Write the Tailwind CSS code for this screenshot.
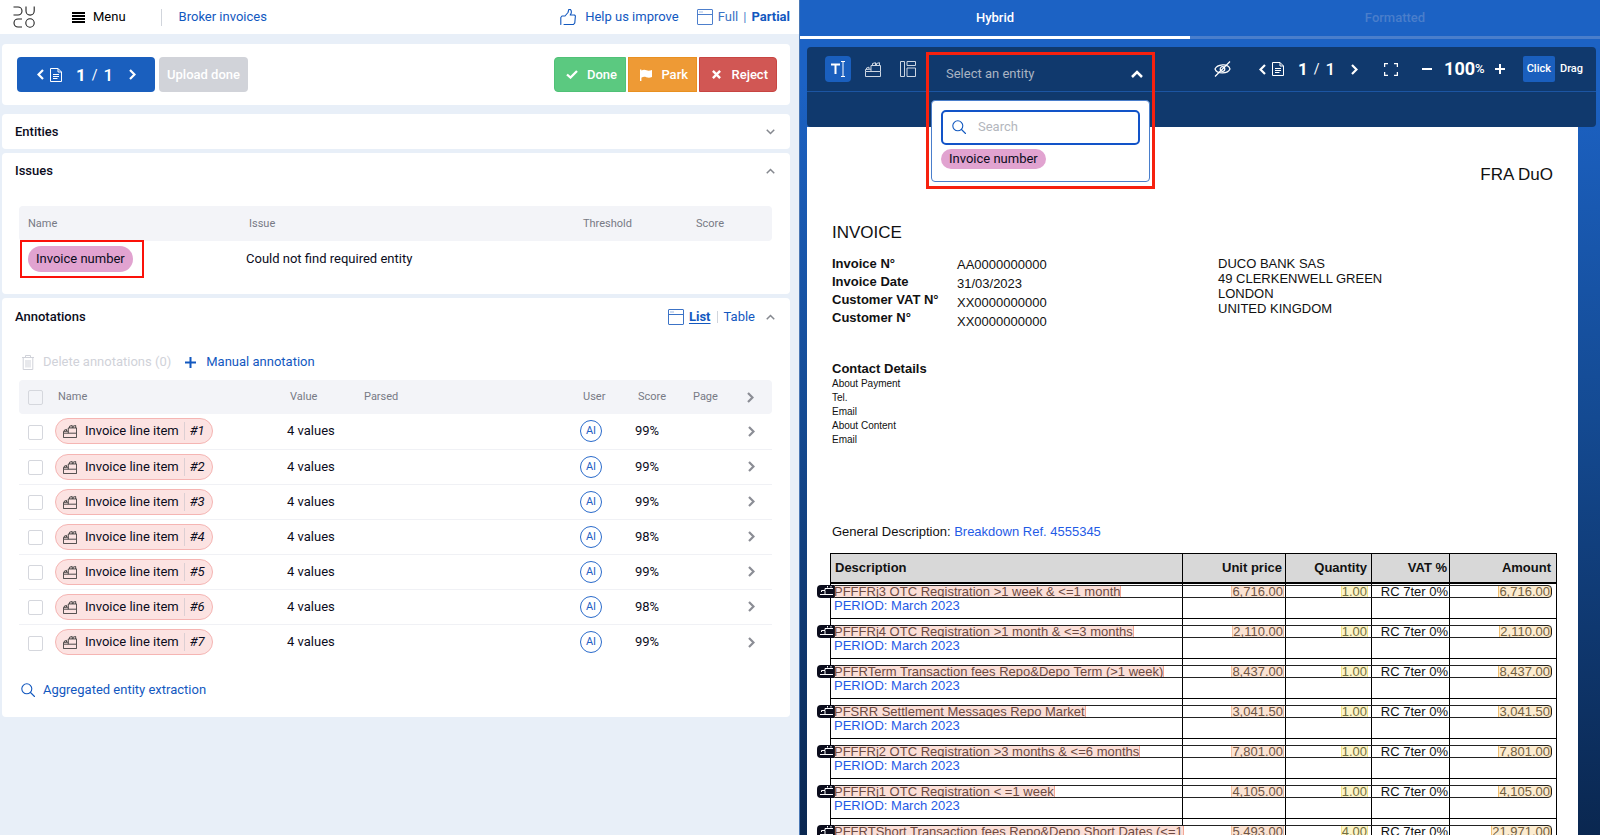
<!DOCTYPE html>
<html lang="en">
<head>
  <meta charset="utf-8">
  <title>Duco - Broker invoices</title>
  <script src="https://cdn.jsdelivr.net/npm/@tailwindcss/browser@4"></script>
</head>
<body class="grid h-screen grid-cols-[799fr_801fr] overflow-hidden bg-[#e8eff8] font-[Roboto,sans-serif] text-[13px] leading-4 text-[#0b0c1c]">

  <!-- icons -->
  <svg class="hidden">
    <symbol id="bricks" viewBox="0 0 16 16" fill="none" stroke="currentColor" stroke-width="1" stroke-linejoin="round">
      <path d="M.5 10.500h15v5H.5zM.5 10.500V8.500L6 8.200M6 10.500v-6h9.500v6M1.500 8V7l2.500-.8V8M7.500 4.500v-2l3-.8v2.800M11.500 4.500v-2l3-.8v2.800"/>
    </symbol>
    <symbol id="search" viewBox="0 0 14 14" fill="none" stroke="currentColor" stroke-width="1.1" stroke-linecap="round">
      <circle cx="5.800" cy="5.800" r="5"/><path d="M9.500 9.500l4 4"/>
    </symbol>
    <symbol id="window" viewBox="0 0 16 16" fill="none" stroke="currentColor" stroke-width="1">
      <rect x=".5" y=".5" width="15" height="15" rx=".5"/><path d="M.5 5.500h15"/><path d="M2.500 3h1M4.500 3h1" stroke-width="1.200"/>
    </symbol>
    <symbol id="doc" viewBox="0 0 12 14" fill="none" stroke="currentColor" stroke-width="1">
      <path d="M.5.500h7.500l3.500 3.500v9.500H.5zM8 .5V4h3.500M3 6.500h6M3 8.500h6M3 10.500h4.500"/>
    </symbol>
    <symbol id="right" viewBox="0 0 7 11" fill="none" stroke="currentColor" stroke-width="2.200">
      <path d="M1 1l4.500 4.500L1 10"/>
    </symbol>
    <symbol id="left" viewBox="0 0 7 11" fill="none" stroke="currentColor" stroke-width="2.200">
      <path d="M6 1L1.500 5.500 6 10"/>
    </symbol>
    <symbol id="up" viewBox="0 0 12 8" fill="none" stroke="currentColor">
      <path d="M1 7l5-5 5 5"/>
    </symbol>
    <symbol id="down" viewBox="0 0 12 8" fill="none" stroke="currentColor">
      <path d="M1 1l5 5 5-5"/>
    </symbol>
  </svg>

  <!-- left side -->
  <main class="min-w-0">
    <header class="flex h-[34px] items-center bg-white pr-[9px] pl-[13px] text-[#1258bf]">
      <svg class="h-[22px] w-[22px] text-[#222]" viewBox="0 0 22 22" fill="none" stroke="currentColor" stroke-width="1.100">
        <path d="M.5 1H5a4 4 0 0 1 0 8H.5M13 .5V5a4 4 0 0 0 8.200 0V.5M9 13H5a4 4 0 0 0 0 8h4"/><circle cx="17" cy="17" r="4.200"/>
      </svg>
      <button class="ml-[37px] flex items-center gap-2 text-black">
        <svg class="h-[11px] w-[13px]" viewBox="0 0 13 11" fill="currentColor"><path d="M0 0h13v2H0zM0 3h13v2H0zM0 6h13v2H0zM0 9h13v2H0z"/></svg>
        Menu
      </button>
      <span class="mr-[17px] ml-[35px] h-[17px] w-px bg-gray-300"></span>
      <a href="#">Broker invoices</a>
      <button class="ml-auto flex items-center gap-[9px]">
        <svg class="h-4 w-4" viewBox="0 0 16 16" fill="none" stroke="currentColor" stroke-width="1.100" stroke-linejoin="round" stroke-linecap="round"><path d="M.8 15.500V8.500L2 7h3l3-3.500.8-3h1.700l.8 1.500v2L10.200 6h4.300l.9.900-.6 7L13.500 15.500H4"/></svg>
        Help us improve
      </button>
      <svg class="ml-[18px] h-4 w-4 text-[#4d7fcc]"><use href="#window"/></svg>
      <button class="ml-[5px] text-[#3c73c6]">Full</button>
      <span class="mx-[5px] text-[#4d7fcc]">|</span>
      <button class="font-bold">Partial</button>
    </header>

    <div class="mt-[10px] mr-[9px] ml-[2px]">
      <section class="mb-[9px] flex h-[61px] items-center justify-between rounded bg-white pr-[13px] pl-[15px] font-medium text-white">
        <div class="flex gap-1">
          <div class="flex h-[35px] w-[138px] items-center rounded bg-[#1a5fbe] pl-5 text-[17px]">
            <button aria-label="Previous document"><svg class="h-[11px] w-[7px]"><use href="#left"/></svg></button>
            <svg class="ml-[6px] h-[14px] w-3"><use href="#doc"/></svg>
            <span class="ml-[14px] font-bold">1</span>
            <span class="mx-[6px] text-sm font-normal">/</span>
            <span>1</span>
            <button class="ml-4" aria-label="Next document"><svg class="h-[11px] w-[7px]"><use href="#right"/></svg></button>
          </div>
          <button class="rounded bg-[#d1d3d9] px-2" disabled>Upload done</button>
        </div>
        <div class="flex h-[35px] gap-[2px]">
          <button class="flex w-[72px] items-center justify-between rounded-l border border-[#50c177] bg-[#5bc980] pr-2 pl-[11px]">
            <svg class="h-[9px] w-3" viewBox="0 0 12 9" fill="none" stroke="currentColor" stroke-width="2.300"><path d="M1 4.500l3.500 3L11 1"/></svg>
            Done
          </button>
          <button class="flex w-[69px] items-center justify-between border border-[#e99020] bg-[#ee9a35] pr-2 pl-[11px]">
            <svg class="h-3 w-3" viewBox="0 0 12 12" fill="currentColor"><path d="M0 .5h1.400v11.500H0zM1.400 1.500C3.500.4 5 .6 6.500 1.300 8.300 2 9.800 1.700 12 .9v7C9.800 9 8 8.800 6.300 8.200 4.500 7.500 3 7.700 1.400 8.700z"/></svg>
            Park
          </button>
          <button class="flex w-[78px] items-center justify-between rounded-r border border-[#c84542] bg-[#d15754] pr-2 pl-3">
            <svg class="h-[9px] w-[9px]" viewBox="0 0 9 9" stroke="currentColor" stroke-width="2.400"><path d="M.9.900l7.200 7.200M8.100.900L.9 8.100"/></svg>
            Reject
          </button>
        </div>
      </section>

      <section class="mb-1 flex h-[35px] items-center justify-between rounded bg-white pr-[15px] pl-[13px]">
        <h2 class="font-medium">Entities</h2>
        <button aria-label="Expand entities"><svg class="h-[6px] w-[9px] text-[#85888f]" stroke-width="2"><use href="#down"/></svg></button>
      </section>

      <section class="mb-1 h-[141px] rounded bg-white">
        <div class="flex h-[35px] items-center justify-between pr-[15px] pl-[13px]">
          <h2 class="font-medium">Issues</h2>
          <button aria-label="Collapse issues"><svg class="h-[6px] w-[9px] text-[#85888f]" stroke-width="2"><use href="#up"/></svg></button>
        </div>
        <div class="mt-[18px] mr-[18px] ml-[17px]">
          <table class="w-full table-fixed text-left">
            <thead class="h-[35px] bg-[#f3f4f8] text-[11px] text-[#777a85]">
              <tr>
                <th class="w-[227px] rounded-l pl-[9px] font-normal">Name</th>
                <th class="pl-[3px] font-normal">Issue</th>
                <th class="w-[113px] pl-[3px] font-normal">Threshold</th>
                <th class="w-[79px] rounded-r pl-[3px] font-normal">Score</th>
              </tr>
            </thead>
            <tbody>
              <tr class="h-[35px]">
                <td class="relative pl-[9px]">
                  <span class="inline-block rounded-full bg-[#e1a3d0] px-2 py-[5px]">Invoice number</span>
                  <span class="absolute -top-px left-px h-[38px] w-[124px] border-2 border-[#fb1109]"></span>
                </td>
                <td>Could not find required entity</td>
                <td></td>
                <td></td>
              </tr>
            </tbody>
          </table>
        </div>
      </section>

      <section class="h-[419px] rounded bg-white">
        <div class="flex h-[37px] items-center pr-[15px] pl-[13px]">
          <h2 class="font-medium">Annotations</h2>
          <svg class="ml-auto h-4 w-4 text-[#3c73c6]"><use href="#window"/></svg>
          <button class="ml-[5px] font-bold text-[#1258bf] underline underline-offset-2">List</button>
          <span class="mx-[6px] h-3 w-px bg-gray-300"></span>
          <button class="text-[#1258bf]">Table</button>
          <button class="ml-[11px]" aria-label="Collapse annotations"><svg class="h-[6px] w-[9px] text-[#85888f]" stroke-width="2"><use href="#up"/></svg></button>
        </div>
        <div class="mr-[18px] ml-[17px]">
          <div class="flex h-[45px] items-center pt-[9px]">
            <button class="flex items-center gap-[9px] pl-[3px] text-[#d0d2d9]" disabled>
              <svg class="h-[15px] w-3" viewBox="0 0 12 15" fill="none" stroke="currentColor"><path d="M0 2.500h12M3.500 2.500V.5h5v2M1.200 2.500v12h9.600v-12M4 5v7.500M6 5v7.500M8 5v7.500"/></svg>
              Delete annotations (0)
            </button>
            <button class="ml-[14px] flex items-center gap-[10px] text-[#1258bf]">
              <svg class="h-[11px] w-[11px]" viewBox="0 0 11 11" stroke="currentColor" stroke-width="2"><path d="M5.500 0v11M0 5.500h11"/></svg>
              Manual annotation
            </button>
          </div>
          <table class="w-full table-fixed text-left">
            <thead class="h-[34px] bg-[#f3f4f8] text-[11px] text-[#777a85]">
              <tr>
                <th class="w-[36px] rounded-l pl-[9px]"><input type="checkbox" aria-label="Select all" class="block h-[15px] w-[15px] appearance-none rounded-xs border border-[#d5d7dd]"></th>
                <th class="w-[232px] pl-[3px] font-normal">Name</th>
                <th class="w-[74px] pl-[3px] font-normal">Value</th>
                <th class="pl-[3px] font-normal">Parsed</th>
                <th class="w-[55px] pl-[3px] font-normal">User</th>
                <th class="w-[55px] pl-[3px] font-normal">Score</th>
                <th class="w-[54px] pl-[3px] font-normal">Page</th>
                <th class="w-[28px] rounded-r pl-[3px]"><svg class="h-[11px] w-[7px] text-[#8b8d95]"><use href="#right"/></svg></th>
              </tr>
            </thead>
            <tbody id="annotations"></tbody>
          </table>
          <button class="mt-[22px] flex items-center gap-2 pl-[2px] text-[#1258bf]">
            <svg class="h-[14px] w-[14px]"><use href="#search"/></svg>
            Aggregated entity extraction
          </button>
        </div>
      </section>
    </div>
  </main>

  <!-- right side -->
  <aside class="flex min-w-0 flex-col overflow-hidden border-l border-[#4a78b5] bg-linear-to-b from-[#1c62c4] from-10% via-[#144a92] via-50% to-[#0a2750] text-white">
    <nav class="grid grid-cols-[39fr_41fr] font-medium">
      <button class="h-[39px] border-b-3 border-white">Hybrid</button>
      <button class="h-[39px] border-b-3 border-[#4a7ecb] text-[#4a7ecb]">Formatted</button>
    </nav>

    <div class="mt-2 mr-1 ml-[7px] h-20 shrink-0 rounded bg-[#10396d]">
      <div class="flex h-[45px] items-center border-b border-[#1c55a3] pr-[13px] pl-[18px]">
        <button class="flex h-[26px] w-[26px] items-center justify-center rounded bg-[#1a5fbe]" aria-label="Text mode">
          <svg class="h-4 w-[14px]" viewBox="0 0 14 16" fill="none" stroke="currentColor"><path d="M0 3.500h9M4.500 3.500V13" stroke-width="2"/><path d="M10 .5h4M10 15.500h4M12 .5v15"/></svg>
        </button>
        <button class="ml-[14px] text-[#cdd6e2]" aria-label="Line items"><svg class="h-4 w-4"><use href="#bricks"/></svg></button>
        <button class="ml-[19px] text-[#cdd6e2]" aria-label="Layout">
          <svg class="h-4 w-4" viewBox="0 0 16 16" fill="none" stroke="currentColor"><path d="M.5.500h4v15h-4zM7 .5h8.500v4H7zM7 7h8.500v8.500H7z"/></svg>
        </button>

        <div class="relative ml-[14px] h-[33px] w-[220px]">
          <button class="flex h-[42px] w-full items-center justify-between pr-[7px] pl-4 text-[#aab4c3]">
            Select an entity
            <svg class="h-2 w-3 text-white" stroke-width="2.500"><use href="#up"/></svg>
          </button>
          <div class="absolute top-[47px] left-px z-10 h-[82px] w-[219px] rounded border border-[#4a7ecb] bg-white px-[9px] pt-[9px] text-[#0b0c1c]">
            <label class="flex h-[35px] items-center gap-3 rounded-[5px] border-2 border-[#1253c8] pl-[9px]">
              <svg class="h-[14px] w-[14px] text-[#1258bf]"><use href="#search"/></svg>
              <input type="text" placeholder="Search" aria-label="Search entities" class="w-36 outline-none placeholder:text-[#b3b6bd]">
            </label>
            <button class="mt-[4px] rounded-full bg-[#e1a3d0] px-2 py-[2px]">Invoice number</button>
          </div>
          <span class="pointer-events-none absolute -top-px -left-1 z-20 h-[137px] w-[229px] border-3 border-[#f6210f]"></span>
        </div>

        <button class="ml-auto" aria-label="Hide annotations">
          <svg class="h-4 w-[17px]" viewBox="0 0 17 16" fill="none" stroke="currentColor" stroke-width="1.200"><path d="M1 8c2-4.500 13-6.500 15 0C14 13 3 13.500 1 8zM1 15.500L16 .5"/><circle cx="8.500" cy="8" r="2.300"/></svg>
        </button>
        <button class="ml-7" aria-label="Previous page"><svg class="h-[11px] w-[7px]"><use href="#left"/></svg></button>
        <svg class="ml-[6px] h-[14px] w-3"><use href="#doc"/></svg>
        <span class="ml-[14px] text-[17px] font-bold">1</span>
        <span class="mx-[6px] text-sm">/</span>
        <span class="text-[17px] font-medium">1</span>
        <button class="ml-4" aria-label="Next page"><svg class="h-[11px] w-[7px]"><use href="#right"/></svg></button>
        <button class="ml-[26px]" aria-label="Fit page">
          <svg class="h-[13px] w-[14px]" viewBox="0 0 14 13" fill="none" stroke="currentColor" stroke-width="1.300"><path d="M.6 4V.6H4M10 .6h3.400V4M13.400 9v3.400H10M4 12.400H.6V9"/></svg>
        </button>
        <button class="ml-6" aria-label="Zoom out"><svg class="h-[10px] w-[10px]" viewBox="0 0 10 10" stroke="currentColor" stroke-width="2"><path d="M0 5h10"/></svg></button>
        <span class="ml-3 text-lg font-bold">100</span><span class="font-medium">%</span>
        <button class="ml-[10px]" aria-label="Zoom in"><svg class="h-[10px] w-[10px]" viewBox="0 0 10 10" stroke="currentColor" stroke-width="2"><path d="M0 5h10M5 0v10"/></svg></button>
        <button class="ml-[18px] h-[26px] rounded-xs bg-[#1a5fbe] px-1 text-[11px] font-medium">Click</button>
        <button class="ml-[5px] text-[11px] font-medium">Drag</button>
      </div>
    </div>

    <!-- invoice page -->
    <article class="mr-[22px] ml-[7px] min-h-0 flex-1 bg-white pr-[21px] pl-[23px] font-['Liberation_Sans',Arial,sans-serif] text-[#111]">
      <p class="pt-10 pr-1 text-right text-[17px]">FRA DuO</p>
      <div class="pl-[2px]">
        <h1 class="mt-[42px] text-[17px]">INVOICE</h1>
        <div class="mt-[14px] flex h-[95px]">
          <div class="w-[125px] text-[13px] leading-[18px] font-bold">
            <p>Invoice N°</p>
            <p>Invoice Date</p>
            <p>Customer VAT N°</p>
            <p>Customer N°</p>
          </div>
          <div class="w-[261px] text-[13px] leading-[19px]">
            <p>AA0000000000</p>
            <p>31/03/2023</p>
            <p>XX0000000000</p>
            <p>XX0000000000</p>
          </div>
          <address class="pt-px text-[13px] leading-[15px] not-italic">
            DUCO BANK SAS<br>
            49 CLERKENWELL GREEN<br>
            LONDON<br>
            UNITED KINGDOM
          </address>
        </div>
        <h2 class="mt-[11px] text-[13px] font-bold">Contact Details</h2>
        <div class="text-[10px] leading-[14px]">
          <p>About Payment</p>
          <p>Tel.</p>
          <p>Email</p>
          <p>About Content</p>
          <p>Email</p>
        </div>
        <p class="mt-[77px] mb-[13px]">General Description: <a href="#" class="text-[#1f5be6]">Breakdown Ref. 4555345</a></p>
      </div>
      <table class="w-full table-fixed border-collapse border border-black text-right text-[13px]">
        <thead class="bg-[#d8d8d8] font-bold">
          <tr class="h-[29px] border-b-2 border-black">
            <th class="border-r border-black pl-1 text-left">Description</th>
            <th class="w-[103px] border-r border-black pr-[3px]">Unit price</th>
            <th class="w-[86px] border-r border-black pr-1">Quantity</th>
            <th class="w-[78px] border-r border-black pr-[2px]">VAT %</th>
            <th class="w-[107px] pr-[5px]">Amount</th>
          </tr>
        </thead>
        <tbody id="lines"></tbody>
      </table>
    </article>
  </aside>

  <script>
    const scores = [99, 99, 99, 98, 99, 98, 99];

    document.getElementById("annotations").innerHTML = scores.map((score, i) => `
      <tr class="h-[35px] border-b border-[#f0f1f5] last:h-[36px] last:border-0">
        <td class="pl-[9px]"><input type="checkbox" aria-label="Select item ${i + 1}" class="mt-[2px] block h-[15px] w-[15px] appearance-none rounded-xs border border-[#d5d7dd]"></td>
        <td>
          <span class="flex h-[26px] w-fit items-center rounded-full border border-[#f5b5b3] bg-[#fce3e2] pr-[7px] pl-[7px]">
            <svg class="h-[14px] w-[14px] text-[#333]"><use href="#bricks"/></svg>
            <span class="ml-2">Invoice line item</span>
            <span class="mr-[5px] ml-[5px] h-[18px] w-px bg-[#dccfd3]"></span>
            <i>#${i + 1}</i>
          </span>
        </td>
        <td>4 values</td>
        <td></td>
        <td><span class="flex h-[22px] w-[22px] items-center justify-center rounded-full border border-[#2a6bcb] text-[11px] text-[#1f62c4]">AI</span></td>
        <td>${score}%</td>
        <td></td>
        <td class="pl-1"><button class="block" aria-label="Open item ${i + 1}"><svg class="h-[11px] w-[7px] text-[#8b8d95]"><use href="#right"/></svg></button></td>
      </tr>`).join("");

    const lines = [
      ["PFFFRj3 OTC Registration >1 week & <=1 month", "6,716.00", "1.00"],
      ["PFFFRj4 OTC Registration >1 month & <=3 months", "2,110.00", "1.00"],
      ["PFFRTerm Transaction fees Repo&Depo Term (>1 week)", "8,437.00", "1.00"],
      ["PFSRR Settlement Messages Repo Market", "3,041.50", "1.00"],
      ["PFFFRj2 OTC Registration >3 months & <=6 months", "7,801.00", "1.00"],
      ["PFFFRj1 OTC Registration < =1 week", "4,105.00", "1.00"],
      ["PFFRTShort Transaction fees Repo&Depo Short Dates (<=1", "5,493.00", "4.00", "21,971.00"],
    ];
    const esc = (s) => s.replace(/&/g, "&amp;").replace(/</g, "&lt;");

    document.getElementById("lines").innerHTML = lines.map(([name, price, qty, amount = price]) => `
      <tr class="relative h-10 border-b border-black first:h-[36px]">
        <td class="border-r border-black pb-1 pl-[2px] text-left align-bottom">
          <mark class="block h-[13px] w-fit overflow-hidden border border-[#f3a795] bg-[#fbdfd8] leading-[12px] whitespace-nowrap text-[#6d4a42]">${esc(name)}</mark>
          <a href="#" class="block pl-px text-[#1f5be6]">PERIOD: March 2023</a>
          <span class="absolute right-[5px] bottom-5 left-[3px] h-[13px] rounded-r border border-[#222]"></span>
          <span class="absolute bottom-5 left-[-14px] flex h-[13px] w-[17px] items-center justify-center rounded-l bg-[#0b0c1c] text-white">
            <svg class="h-3 w-[15px]" viewBox="0 0 15 12" fill="none" stroke="currentColor"><path d="M2 9.500h13M3.500 7V5.500H7V3.500h8M7 6v3M9.500 2.500V1M13 2.500V1"/></svg>
          </span>
        </td>
        <td class="border-r border-black pr-px pb-5 align-bottom"><mark class="ml-auto block h-[13px] w-fit overflow-hidden border border-[#f5c0a0] bg-[#fbe3d3] leading-[12px] text-[#6f5545]">${price}</mark></td>
        <td class="border-r border-black pr-[3px] pb-5 align-bottom"><mark class="ml-auto block h-[13px] w-fit overflow-hidden border border-[#f5e58a] bg-[#fdf5c8] leading-[12px] text-[#75703f]">${qty}</mark></td>
        <td class="border-r border-black pr-px pb-5 align-bottom leading-[13px]">RC 7ter 0%</td>
        <td class="pr-[5px] pb-5 align-bottom"><mark class="ml-auto block h-[13px] w-fit overflow-hidden rounded-r border border-[#f2c070] bg-[#fcecd0] leading-[12px] text-[#73603f]">${amount}</mark></td>
      </tr>`).join("");
  </script>
</body>
</html>
